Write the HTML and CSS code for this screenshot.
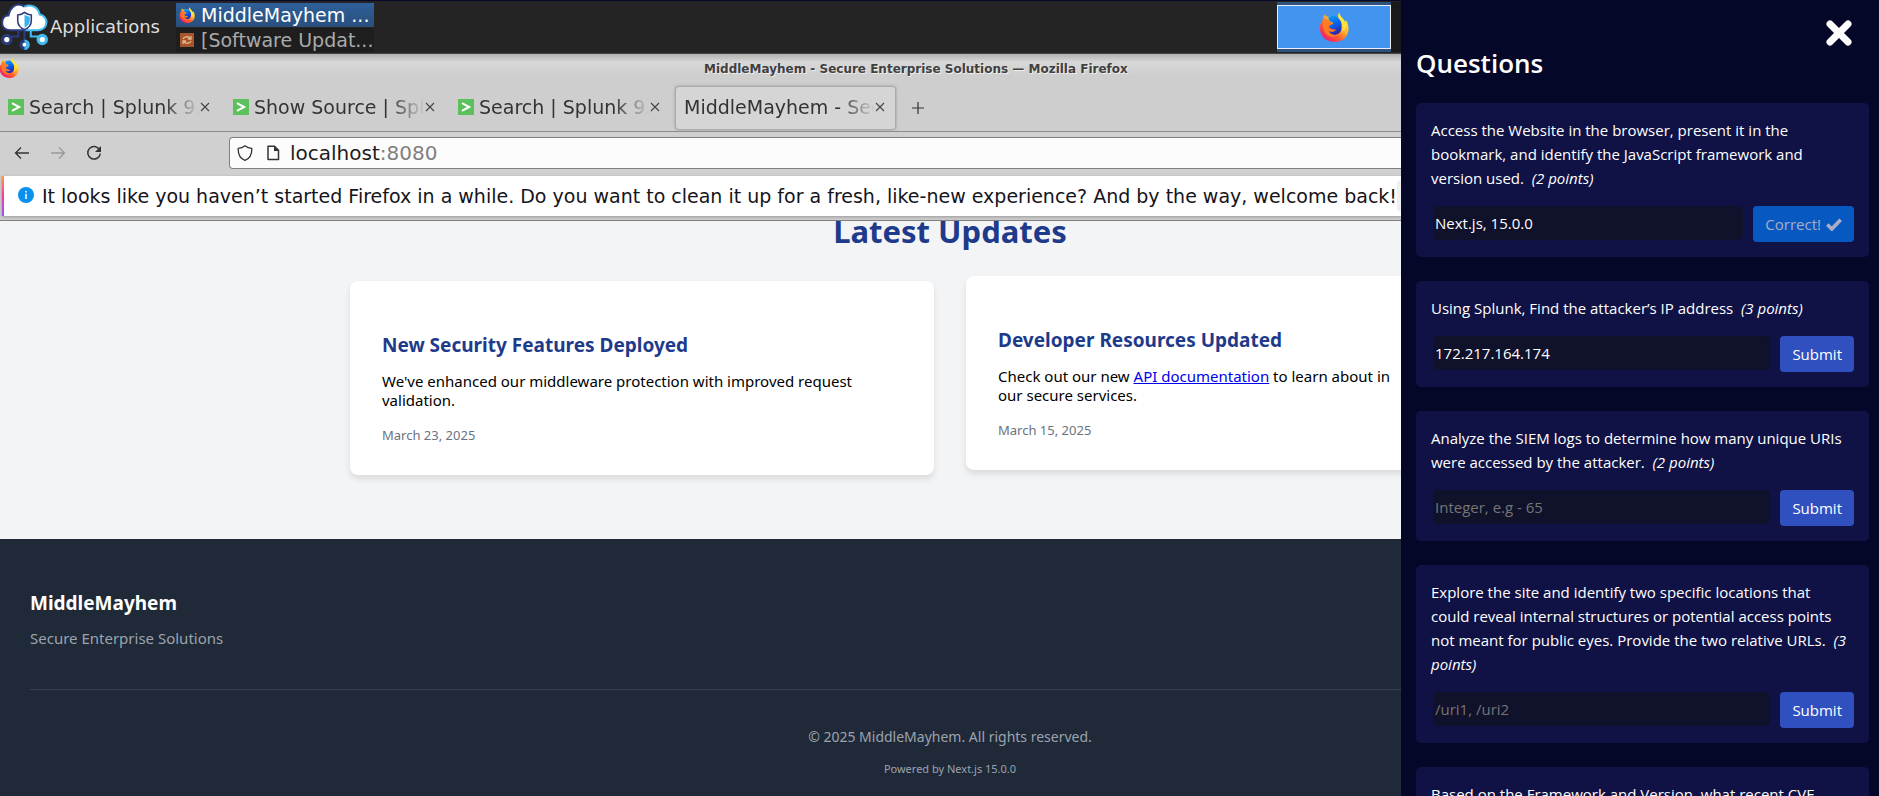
FILE: index.html
```html
<!DOCTYPE html>
<html lang="en">
<head>
<meta charset="utf-8">
<title>MiddleMayhem lab</title>
<link rel="stylesheet" href="styles.css">
</head>
<body>
<svg class="defs" aria-hidden="true">
  <defs>
    <linearGradient id="ff-flame" x1="0.85" y1="0.1" x2="0.15" y2="0.95">
      <stop offset="0" stop-color="#fff44f"/><stop offset="0.35" stop-color="#ffb92e"/><stop offset="0.65" stop-color="#ff5a2f"/><stop offset="1" stop-color="#f0127a"/>
    </linearGradient>
    <linearGradient id="ff-globe" x1="0.3" y1="0" x2="0.6" y2="1">
      <stop offset="0" stop-color="#0a9bff"/><stop offset="0.5" stop-color="#0a5be8"/><stop offset="1" stop-color="#321fa0"/>
    </linearGradient>
    <symbol id="firefox" viewBox="0 0 32 32">
      <path fill="url(#ff-flame)" d="M21.500 0.500C20 3 20.500 5 22 7C19 4 15 3.500 11 5C9 5.200 7 5 6 2.500C4.500 5 3.800 7 4 9C1.500 12 0.500 15 1 19C2 27 9 32 16.500 32C25.500 32 32 25.500 31.500 17C31.300 13 29.500 9.500 28.500 8.500C28.500 10 28.500 11 28 11.500C26.500 6.500 22 5 21.500 0.500Z"/>
      <path fill="url(#ff-globe)" d="M10 5.500C14 3 19 3.500 21 7C24 9 24.500 14 24 18C23 23 18 25.500 14 24C11.500 23 10 21.500 10 20C13 21.500 16 21 18 19C15 18.500 12 18 11 16C10.500 14 12 13.500 14.500 13C15.500 12 15 11 13 10.500C11 10 10 8 10 5.500Z"/>
      <path fill="#ffe83b" opacity="0.85" d="M21.500 0.500C20 4 20.500 6 22 8C25.500 11.500 26 17 24 21C29 19 30.500 13 28.500 8.500L28 11.500C26.500 6.500 22 5 21.500 0.500Z"/>
      <path fill="#ff7a20" d="M4 9C6 7 8 7.500 9.500 9C11 10.500 12.500 10.500 14 12C13 14 10 14 9.500 16C9.500 18.500 13 19.500 18 19C16 22 12 21.500 10 20C12 24 17 26 21 23C17 29 8 27 5.500 20C4.500 16 4 13 4 9Z"/>
    </symbol>
    <symbol id="splunk" viewBox="0 0 16 16">
      <path fill="#5cc05c" d="M0 0H16V16H0Z"/><path fill="none" stroke="#fff" stroke-width="2" d="M4 4.200L11.200 8L4 11.800"/>
    </symbol>
    <symbol id="close" viewBox="0 0 10 10">
      <path fill="none" stroke="#444" stroke-width="1.100" d="M1 1L9 9M9 1L1 9"/>
    </symbol>
  </defs>
</svg>

<main class="stage">
  <header class="taskbar">
    <button class="apps" type="button">
      <svg class="apps-logo" viewBox="0 0 46 46" aria-hidden="true">
        <path fill="#fff" d="M10 27C4 27 1.500 23 2 19C2.500 15 5 13 8 13C9 6 14 2 19 2.500C21 2.600 22.500 3.500 23.500 4.500C31 1 37 6 38 12C42 12.500 45 16 44.500 20C44 25 40 27 36 27Z"/>
        <path fill="none" stroke="#2b3a7e" stroke-width="2" d="M23 27H10C4 27 1.500 23 2 19C2.500 15 5 13 8 13C9 6 14 2 19 2.500C21 2.600 22.500 3.500 23.500 4.500"/>
        <path fill="none" stroke="#41baf0" stroke-width="2" d="M23.500 4.500C31 1 37 6 38 12C42 12.500 45 16 44.500 20C44 25 40 27 36 27H23"/>
        <path fill="none" stroke="#2b3a7e" stroke-width="2" d="M17.500 27V33H10M23.500 27V39"/>
        <path fill="none" stroke="#41baf0" stroke-width="2" d="M29.500 27V33H37"/>
        <path fill="#fff" stroke="#2b3a7e" stroke-width="1.500" d="M23.500 10C21 12 19 12.500 17 12.500V18C17 22 20 25 23.500 26.500C27 25 30 22 30 18V12.500C28 12.500 26 12 23.500 10Z"/>
        <path fill="#35b3ee" d="M23.500 12C25 13.300 27 14 28.500 14V18C28.500 21 26 23.500 23.500 24.700Z"/>
        <circle cx="6.500" cy="36" r="4" fill="#fff" stroke="#2b3a7e" stroke-width="3"/>
        <circle cx="40.500" cy="36" r="4" fill="#fff" stroke="#41baf0" stroke-width="3"/>
        <circle cx="23.500" cy="41" r="3.500" fill="#fff" stroke="#2b3a7e" stroke-width="3"/>
        <path fill="none" stroke="#41baf0" stroke-width="3" d="M23.500 37.500A3.500 3.500 0 0 1 23.500 44.500"/>
      </svg>
      <span>Applications</span>
    </button>
    <nav class="tasks" aria-label="Windows">
      <button class="task task-active" type="button">
        <svg class="task-icon" aria-hidden="true"><use href="#firefox"/></svg>
        <span>MiddleMayhem ...</span>
      </button>
      <button class="task" type="button">
        <svg class="task-icon" viewBox="0 0 16 16" aria-hidden="true">
          <path fill="#a5562c" d="M1 1H15V15H1Z"/>
          <path fill="none" stroke="#e9b48e" stroke-width="1.300" d="M4 7C5 4.500 9 4 11 6M12 4V7H9M12 9C11 11.500 7 12 5 10M4 12V9H7"/>
        </svg>
        <span>[Software Updat...</span>
      </button>
    </nav>
    <button class="pager" type="button" aria-label="Workspace 1">
      <span class="pager-window"><svg class="pager-icon" aria-hidden="true"><use href="#firefox"/></svg></span>
    </button>
  </header>

  <section class="browser">
    <div class="titlebar">
      <svg class="title-icon" aria-hidden="true"><use href="#firefox"/></svg>
      <span class="title-text">MiddleMayhem - Secure Enterprise Solutions — Mozilla Firefox</span>
    </div>
    <div class="tabs">
      <div class="tab"><svg class="favicon" aria-hidden="true"><use href="#splunk"/></svg><span class="tab-text">Search | Splunk 9.</span><button class="tab-close" type="button" aria-label="Close tab"><svg aria-hidden="true"><use href="#close"/></svg></button></div>
      <div class="tab"><svg class="favicon" aria-hidden="true"><use href="#splunk"/></svg><span class="tab-text">Show Source | Spl</span><button class="tab-close" type="button" aria-label="Close tab"><svg aria-hidden="true"><use href="#close"/></svg></button></div>
      <div class="tab"><svg class="favicon" aria-hidden="true"><use href="#splunk"/></svg><span class="tab-text">Search | Splunk 9.</span><button class="tab-close" type="button" aria-label="Close tab"><svg aria-hidden="true"><use href="#close"/></svg></button></div>
      <div class="tab tab-active"><span class="tab-text">MiddleMayhem - Sec</span><button class="tab-close" type="button" aria-label="Close tab"><svg aria-hidden="true"><use href="#close"/></svg></button></div>
      <button class="new-tab" type="button" aria-label="New tab"><svg viewBox="0 0 12 12" aria-hidden="true"><path fill="none" stroke="#333" stroke-width="1.200" d="M6 0V12M0 6H12"/></svg></button>
    </div>
    <div class="toolbar">
      <div class="nav-buttons">
        <button type="button" aria-label="Back"><svg viewBox="0 0 16 16" aria-hidden="true"><path fill="none" stroke="#333" stroke-width="1.300" d="M15 8H1.500M7 2.500L1.500 8L7 13.500"/></svg></button>
        <button type="button" aria-label="Forward" disabled><svg viewBox="0 0 16 16" aria-hidden="true"><path fill="none" stroke="#999" stroke-width="1.300" d="M1 8H14.500M9 2.500L14.500 8L9 13.500"/></svg></button>
        <button type="button" aria-label="Reload"><svg viewBox="0 0 16 16" aria-hidden="true"><path fill="none" stroke="#333" stroke-width="1.500" d="M13.600 4.800A6.300 6.300 0 1 0 14.300 8.500"/><path fill="#333" d="M15 1V7H9Z"/></svg></button>
      </div>
      <div class="urlbar">
        <svg class="shield" viewBox="0 0 16 16" aria-hidden="true"><path fill="none" stroke="#333" stroke-width="1.300" stroke-linejoin="round" d="M8 0.800C6 2.400 3.500 3.200 1.200 3.400C1 9 3 13.500 8 15.400C13 13.500 15 9 14.800 3.400C12.500 3.200 10 2.400 8 0.800Z"/></svg>
        <svg class="page-icon" viewBox="0 0 14 16" aria-hidden="true"><path fill="none" stroke="#333" stroke-width="1.500" stroke-linejoin="round" d="M2 1.200H8.500L12.500 5.200V14.600H2Z"/><path fill="#333" d="M8 1V6H13Z"/></svg>
        <span>localhost<span class="port">:8080</span></span>
      </div>
    </div>
    <div class="notice">
      <svg class="info" viewBox="0 0 16 16" aria-hidden="true"><circle cx="8" cy="8" r="8" fill="#0a90ef"/><path stroke="#fff" stroke-width="1.500" d="M8 6.800V12M8 4V5.500"/></svg>
      <span class="notice-text">It looks like you haven’t started Firefox in a while. Do you want to clean it up for a fresh, like-new experience? And by the way, welcome back!</span>
      <button class="notice-button" type="button" aria-label="Refresh Firefox"></button>
    </div>

    <div class="viewport">
      <div class="page">
        <section class="updates">
          <h2>Latest Updates</h2>
          <div class="cards">
            <article class="card">
              <h3>New Security Features Deployed</h3>
              <p>We've enhanced our middleware protection with improved request validation.</p>
              <time>March 23, 2025</time>
            </article>
            <article class="card card-raised">
              <h3>Developer Resources Updated</h3>
              <p>Check out our new <a href="#">API documentation</a> to learn about in<br>our secure services.</p>
              <time>March 15, 2025</time>
            </article>
          </div>
        </section>
        <footer class="footer">
          <div class="brand">
            <h4>MiddleMayhem</h4>
            <p>Secure Enterprise Solutions</p>
          </div>
          <div class="legal">
            <p>© 2025 MiddleMayhem. All rights reserved.</p>
            <p class="powered">Powered by Next.js 15.0.0</p>
          </div>
        </footer>
      </div>
    </div>
  </section>
</main>

<aside class="panel">
  <button class="panel-close" type="button" aria-label="Close questions"><svg viewBox="0 0 26 26" aria-hidden="true"><path fill="none" stroke="#fff" stroke-width="7" stroke-linecap="round" d="M4 4L22 22M22 4L4 22"/></svg></button>
  <h1>Questions</h1>
  <form class="question">
    <label for="q1">Access the Website in the browser, present it in the bookmark, and identify the JavaScript framework and version used. &nbsp;<em>(2 points)</em></label>
    <div class="answer"><input id="q1" type="text" value="Next.js, 15.0.0"><button class="correct" type="button" disabled>Correct! <svg viewBox="0 0 16 13" aria-hidden="true"><path fill="none" stroke="#a9aec4" stroke-width="3.600" d="M1.300 6.500L5.800 11L14.700 1.700"/></svg></button></div>
  </form>
  <form class="question">
    <label for="q2">Using Splunk, Find the attacker’s IP address &nbsp;<em>(3 points)</em></label>
    <div class="answer"><input id="q2" type="text" value="172.217.164.174"><button type="button">Submit</button></div>
  </form>
  <form class="question">
    <label for="q3">Analyze the SIEM logs to determine how many unique URIs were accessed by the attacker. &nbsp;<em>(2 points)</em></label>
    <div class="answer"><input id="q3" type="text" placeholder="Integer, e.g - 65"><button type="button">Submit</button></div>
  </form>
  <form class="question">
    <label for="q4">Explore the site and identify two specific locations that<br>could reveal internal structures or potential access points not meant for public eyes. Provide the two relative URLs. &nbsp;<em>(3 points)</em></label>
    <div class="answer"><input id="q4" type="text" placeholder="/uri1, /uri2"><button type="button">Submit</button></div>
  </form>
  <form class="question">
    <label for="q5">Based on the Framework and Version, what recent CVE</label>
    <div class="answer"><input id="q5" type="text"><button type="button">Submit</button></div>
  </form>
</aside>
</body>
</html>
```
FILE: styles.css
```css
* { box-sizing: border-box; }
body {
  margin: 0;
  height: 100vh;
  display: flex;
  overflow: hidden;
  background: #050729;
  font-family: "DejaVu Sans", sans-serif;
}
button { border: 0; padding: 0; background: none; font: inherit; color: inherit; }
h1, h2, h3, h4, p { margin: 0; }
svg { display: block; flex: none; }
.defs { position: absolute; width: 0; height: 0; }

/* Remote desktop */
.stage {
  flex: 1;
  min-width: 0;
  display: flex;
  flex-direction: column;
  overflow: hidden;
  padding-top: 1px;
}
.taskbar {
  flex: none;
  height: 53px;
  display: flex;
  align-items: center;
  background: #242424;
  border-bottom: 1px solid #444;
  color: #ddd;
  font-size: 19px;
}
.apps { display: flex; align-items: center; gap: 2px; width: 176px; padding-bottom: 2px; font-size: 18px; }
.apps-logo { width: 48px; height: 48px; }
.tasks { width: 198px; display: flex; flex-direction: column; gap: 1px; }
.task {
  height: 24px;
  display: flex;
  align-items: center;
  gap: 6px;
  padding-left: 3px;
  background: #1e1e1e;
  color: #aaa;
  line-height: 24px;
  white-space: nowrap;
}
.task-active { background: linear-gradient(#2e6099, #2a4f7c); color: #fff; }
.task-icon { width: 16px; height: 16px; }
.pager {
  margin-left: auto;
  width: 124px;
  height: 50px;
  padding: 3px 0;
  border-right: 10px solid #191919;
  background: #2d527d;
}
.pager-window {
  height: 44px;
  display: flex;
  align-items: center;
  justify-content: center;
  background: #4294ee;
  border: 1px solid #eee;
}
.pager-icon { width: 30px; height: 30px; }

/* Browser window */
.browser { flex: 1; min-height: 0; display: flex; flex-direction: column; background: #cecece; color: #333; font-size: 19px; }
.titlebar {
  height: 30px;
  display: flex;
  align-items: center;
  background: linear-gradient(#b0b0b0, #d8d8d8 8px, #cecece 22px);
}
.title-icon { width: 20px; height: 20px; margin: -2px 0 0 -1px; }
.title-text { margin-left: 685px; font-size: 12px; font-weight: bold; color: #404040; text-shadow: 1px 1px #eee; white-space: nowrap; }
.tabs { height: 48px; display: flex; align-items: center; gap: 4px; border-bottom: 1px solid #8b8b8b; }
.tab { width: 221px; height: 44px; display: flex; align-items: center; padding: 0 11px 2px 8px; border-radius: 4px; }
.tab-active { padding: 0 10px 2px 8px; background: #d5d5d5; border: 1px solid #aaa; box-shadow: 0 0 3px #999; }
.favicon { width: 16px; height: 16px; margin-right: 5px; }
.tab-text {
  flex: 1;
  min-width: 0;
  overflow: hidden;
  white-space: nowrap;
  -webkit-mask-image: linear-gradient(to left, transparent, #000 36px);
  mask-image: linear-gradient(to left, transparent, #000 36px);
}
.tab-close svg { width: 10px; height: 10px; }
.new-tab { margin-left: 12px; }
.new-tab svg { width: 12px; height: 12px; }
.toolbar { height: 44px; display: flex; align-items: center; padding-bottom: 2px; background: #d0d0d0; }
.nav-buttons { width: 229px; display: flex; gap: 20px; padding-left: 14px; }
.nav-buttons svg { width: 16px; height: 16px; }
.urlbar {
  flex: 1;
  height: 32px;
  display: flex;
  align-items: center;
  padding-left: 7px;
  background: #fcfcfc;
  border: 1px solid #808080;
  border-right: 0;
  border-radius: 4px 0 0 4px;
  color: #1c1c1c;
  font-size: 20px;
}
.shield { width: 16px; height: 16px; }
.page-icon { width: 14px; height: 16px; margin: 0 10px 0 13px; }
.port { color: #808080; }
.notice {
  height: 40px;
  margin-left: 2px;
  display: flex;
  align-items: center;
  padding-left: 14px;
  background: #fff;
  border-left: 2px solid;
  border-image: linear-gradient(#ff9a3c, #f33b9d, #9059ff) 1;
  box-shadow: 0 1px 3px #999;
  color: #15141a;
  white-space: nowrap;
}
.info { width: 16px; height: 16px; margin: 0 8px 3px 0; }
.notice-button { flex: none; margin-left: auto; width: 8px; height: 32px; background: #f0f0f2; border-radius: 4px 0 0 4px; }
.viewport { flex: 1; min-height: 0; margin-top: 4px; overflow: hidden; border-top: 1px solid #808080; background: #f3f4f6; }

/* Site page, wider than the visible part of the browser */
.page { width: calc(100vw + 21px); font-family: "Noto Sans", sans-serif; font-size: 15px; line-height: 19px; color: #000; }
.updates { max-width: 1200px; margin: 0 auto; padding-bottom: 64px; }
.updates h2 { margin: -10px 0 30px; font-size: 31px; line-height: 40px; text-align: center; color: #1e3a8a; }
.cards { display: grid; grid-template-columns: 1fr 1fr; gap: 32px; }
.card { padding: 52px 32px 32px; background: #fff; border-radius: 8px; box-shadow: 0 4px 6px rgba(0, 0, 0, 0.1); }
.card-raised { transform: translateY(-5px); }
.card h3 { margin-bottom: 15px; font-size: 19px; line-height: 24px; color: #1e3a8a; }
.card p { margin-bottom: 17px; }
.card a { color: #00e; }
.card time { display: block; font-size: 13px; line-height: 16px; color: #6b7280; }
.footer { padding: 52px 30px 64px; background: #1f2937; color: #9ca3af; }
.brand { padding-bottom: 41px; border-bottom: 1px solid #374151; }
.brand h4 { margin-bottom: 14px; font-size: 19px; line-height: 24px; color: #fff; }
.legal { padding-top: 37px; text-align: center; font-size: 14px; line-height: 20px; }
.legal .powered { margin-top: 12px; font-size: 11px; }

/* Question panel */
.panel {
  flex: none;
  width: 478px;
  display: flex;
  flex-direction: column;
  gap: 24px;
  padding: 48px 10px 0 15px;
  position: relative;
  overflow: hidden;
  color: #fff;
  font-family: "Open Sans", sans-serif;
  font-size: 15px;
  line-height: 24px;
}
.panel-close { position: absolute; top: 20px; right: 27px; }
.panel-close svg { width: 26px; height: 26px; }
.panel h1 { font-size: 26px; line-height: 31px; font-weight: 600; }
.question { flex: none; padding: 15px; border-radius: 5px; background: #101245; }
.question label { display: block; margin-bottom: 16px; }
.answer { display: flex; gap: 10px; padding-left: 2px; }
.answer input {
  flex: 1;
  min-width: 0;
  height: 34px;
  padding: 0 2px;
  border: 0;
  border-radius: 5px;
  background: #10112b;
  color: #fff;
  font: inherit;
}
.answer input::placeholder { color: #757575; }
.answer button { height: 36px; padding: 0 12px; border-radius: 4px; background: #3050bf; color: #fff; }
.answer .correct { display: flex; align-items: center; gap: 5px; background: #0759c1; color: #a9aec4; }
.correct svg { width: 16px; height: 13px; }
```
